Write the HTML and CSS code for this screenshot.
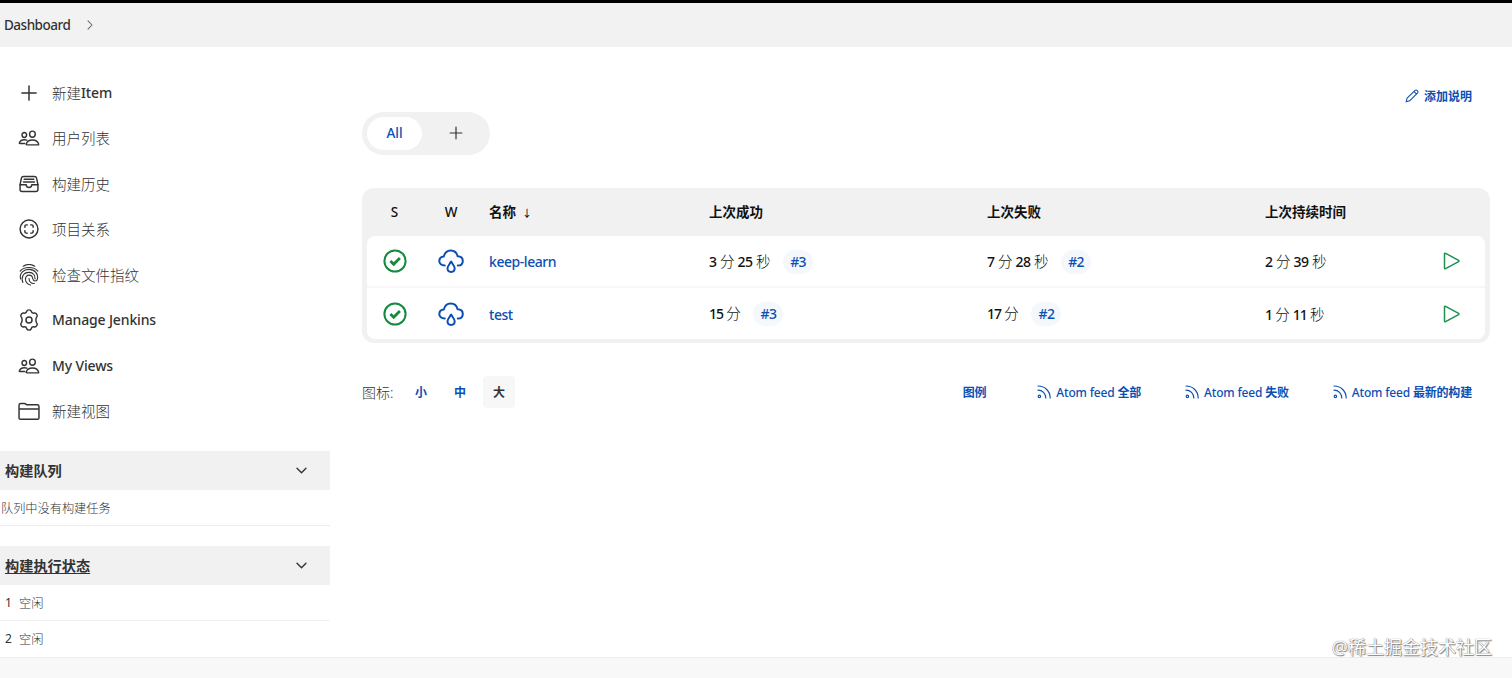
FILE: index.html
```html
<!DOCTYPE html>
<html lang="zh-CN">
<head>
    <meta charset="utf-8">
    <title>Dashboard [Jenkins]</title>
    <link rel="stylesheet" href="styles.css">
</head>
<body>
    <svg class="symbols" aria-hidden="true">
        <symbol id="icon-plus" viewBox="0 0 512 512">
            <path d="M256 90v332M422 256H90"/>
        </symbol>
        <symbol id="icon-people" viewBox="0 0 512 512">
            <path d="M402 168c-3 40-33 72-66 72s-64-32-66-72c-3-42 26-72 66-72s69 31 66 72z"/>
            <path d="M336 304c-66 0-129 33-145 96-2 9 3 16 12 16h266c9 0 15-7 12-16-16-64-79-96-145-96z"/>
            <path d="M200 186c-3 32-27 58-53 58s-51-26-53-58c-3-33 21-58 53-58s55 26 53 58z"/>
            <path d="M206 306c-18-8-38-11-59-11-52 0-102 26-115 77-1 7 3 13 10 13h114"/>
        </symbol>
        <symbol id="icon-tray" viewBox="0 0 512 512">
            <path d="M384 80H128c-26 0-43 14-48 40L48 272v112a48 48 0 0 0 48 48h320a48 48 0 0 0 48-48V272l-32-152c-5-27-23-40-48-40z"/>
            <path d="M48 272h144m128 0h144M192 272a64 64 0 0 0 128 0M144 144h224M128 208h256"/>
        </symbol>
        <symbol id="icon-scan" viewBox="0 0 512 512">
            <circle cx="256" cy="256" r="208"/>
            <path d="M296 352h24a32 32 0 0 0 32-32v-24M352 216v-24a32 32 0 0 0-32-32h-24M216 352h-24a32 32 0 0 1-32-32v-24M160 216v-24a32 32 0 0 1 32-32h24"/>
        </symbol>
        <symbol id="icon-fingerprint" viewBox="0 0 512 512">
            <path d="M120 52C206 0 306 0 392 52"/>
            <path d="M50 166C136 54 376 54 462 166"/>
            <path d="M62 350C20 216 130 126 256 126c140 0 220 110 196 226-14 62-98 54-106-4-8-60-44-88-90-88s-90 40-82 106c10 68 56 108 118 124"/>
            <path d="M112 430c-46-120 10-236 144-236 108 0 146 84 140 152"/>
            <path d="M256 336c2 84 56 124 124 116"/>
        </symbol>
        <symbol id="icon-gear" viewBox="0 0 512 512">
            <circle cx="256" cy="256" r="70"/>
            <path d="M204 52c10-42 94-42 104 0 8 32 38 50 72 42 44-12 88 62 56 94-26 24-26 112 0 136 32 32-12 106-56 94-34-8-64 10-72 42-10 42-94 42-104 0-8-32-38-50-72-42-44 12-88-62-56-94 26-24 26-112 0-136-32-32 12-106 56-94 34 8 64-10 72-42z"/>
        </symbol>
        <symbol id="icon-folder" viewBox="0 0 512 512">
            <path d="M24 416V120a40 40 0 0 1 40-40h88c28 0 36 32 64 32h232a40 40 0 0 1 40 40v264a32 32 0 0 1-32 32H56a32 32 0 0 1-32-32zM24 208h464"/>
        </symbol>
        <symbol id="icon-chevron" viewBox="0 0 512 512">
            <path d="M80 170l176 172 176-172"/>
        </symbol>
        <symbol id="icon-success" viewBox="0 0 24 24">
            <circle cx="12" cy="12" r="10.6"/>
            <path class="tick" d="M7.400 12l3.300 3.300 6.200-6.200"/>
        </symbol>
        <symbol id="icon-rain" viewBox="0 0 26 24">
            <path d="M6.800 16.500C3.500 16.500 1.300 14.700 1.300 12.200c0-2.600 1.800-4.300 4.500-4.600C6.700 3.600 9.300 1.500 12.700 1.500c3.400 0 6 2 6.900 5.700 3.200.1 5.200 2 5.200 4.700 0 2.700-2 4.600-5 4.600"/>
            <path d="M13.100 12.600c-1.500 2.500-3.600 4.600-3.600 6.700 0 2.200 1.600 3.600 3.600 3.600s3.600-1.400 3.600-3.600c0-2.100-2.100-4.200-3.600-6.700z"/>
        </symbol>
        <symbol id="icon-play" viewBox="0 0 18 18">
            <path d="M1.500 1.900v14.200c0 .7.600.9 1.100.6l13-7.100c.5-.3.500-.9 0-1.200l-13-7.100c-.5-.3-1.100 0-1.100.6z"/>
        </symbol>
        <symbol id="icon-pencil" viewBox="0 0 16 16">
            <path d="M1.300 14.700l1.100-4.200L11.500 1.500c1.600-1.300 4.200 1.100 2.900 2.900L5.300 13.500zM10.200 2.800l3 3"/>
        </symbol>
        <symbol id="icon-rss" viewBox="0 0 14 14">
            <circle cx="2.400" cy="11.400" r="1.200"/>
            <path d="M1 5.200c4.400 0 7.800 3.200 7.800 7.800M1 1c7 0 12.200 5.200 12.200 12"/>
        </symbol>
    </svg>

    <header class="breadcrumbs">
        <a>Dashboard</a>
        <svg class="icon crumb-arrow"><use href="#icon-chevron"/></svg>
    </header>

    <div class="page-body">
        <aside class="side-panel">
            <nav class="tasks">
                <a class="task"><svg class="icon"><use href="#icon-plus"/></svg>新建<span>Item</span></a>
                <a class="task"><svg class="icon"><use href="#icon-people"/></svg>用户列表</a>
                <a class="task"><svg class="icon"><use href="#icon-tray"/></svg>构建历史</a>
                <a class="task"><svg class="icon"><use href="#icon-scan"/></svg>项目关系</a>
                <a class="task"><svg class="icon icon-fine"><use href="#icon-fingerprint"/></svg>检查文件指纹</a>
                <a class="task"><svg class="icon"><use href="#icon-gear"/></svg><span>Manage Jenkins</span></a>
                <a class="task"><svg class="icon"><use href="#icon-people"/></svg><span>My Views</span></a>
                <a class="task"><svg class="icon"><use href="#icon-folder"/></svg>新建视图</a>
            </nav>

            <section class="pane">
                <div class="pane-header">
                    <b>构建队列</b>
                    <svg class="icon"><use href="#icon-chevron"/></svg>
                </div>
                <div class="pane-row queue-empty">队列中没有构建任务</div>
            </section>

            <section class="pane">
                <div class="pane-header">
                    <b class="underlined">构建执行状态</b>
                    <svg class="icon"><use href="#icon-chevron"/></svg>
                </div>
                <div class="pane-row"><span class="num">1</span>空闲</div>
                <div class="pane-row"><span class="num">2</span>空闲</div>
            </section>
        </aside>

        <main class="main-panel">
            <div class="description">
                <a class="link"><svg class="icon"><use href="#icon-pencil"/></svg><b>添加说明</b></a>
            </div>

            <div class="tab-bar">
                <a class="tab active">All</a>
                <a class="tab"><svg class="icon"><use href="#icon-plus"/></svg></a>
            </div>

            <div class="table-wrap">
                <table class="jobs">
                    <colgroup>
                        <col class="col-status">
                        <col class="col-weather">
                        <col class="col-name">
                        <col class="col-time">
                        <col class="col-time">
                        <col>
                        <col class="col-run">
                    </colgroup>
                    <thead>
                        <tr>
                            <th class="center">S</th>
                            <th class="center">W</th>
                            <th><b>名称</b><span class="sort">↓</span></th>
                            <th><b>上次成功</b></th>
                            <th><b>上次失败</b></th>
                            <th><b>上次持续时间</b></th>
                            <th></th>
                        </tr>
                    </thead>
                    <tbody>
                        <tr>
                            <td class="center"><svg class="status"><use href="#icon-success"/></svg></td>
                            <td class="center"><svg class="weather"><use href="#icon-rain"/></svg></td>
                            <td><a class="job-link">keep-learn</a></td>
                            <td>3 <i>分</i> 25 <i>秒</i><a class="badge">#3</a></td>
                            <td>7 <i>分</i> 28 <i>秒</i><a class="badge">#2</a></td>
                            <td class="duration">2 <i>分</i> 39 <i>秒</i></td>
                            <td class="center"><svg class="run"><use href="#icon-play"/></svg></td>
                        </tr>
                        <tr>
                            <td class="center"><svg class="status"><use href="#icon-success"/></svg></td>
                            <td class="center"><svg class="weather"><use href="#icon-rain"/></svg></td>
                            <td><a class="job-link">test</a></td>
                            <td><span class="tight">15</span> <i>分</i><a class="badge">#3</a></td>
                            <td><span class="tight">17</span> <i>分</i><a class="badge">#2</a></td>
                            <td class="duration"><span class="tight">1</span> <i>分</i> <span class="tight">11</span> <i>秒</i></td>
                            <td class="center"><svg class="run"><use href="#icon-play"/></svg></td>
                        </tr>
                    </tbody>
                </table>
            </div>

            <div class="table-footer">
                <div class="icon-sizes">
                    <span class="label">图标:</span>
                    <a class="size">小</a>
                    <a class="size">中</a>
                    <a class="size selected">大</a>
                </div>
                <div class="feeds">
                    <a class="link"><b>图例</b></a>
                    <a class="link"><svg class="icon"><use href="#icon-rss"/></svg><span>Atom feed <b>全部</b></span></a>
                    <a class="link"><svg class="icon"><use href="#icon-rss"/></svg><span>Atom feed <b>失败</b></span></a>
                    <a class="link"><svg class="icon"><use href="#icon-rss"/></svg><span>Atom feed <b>最新的构建</b></span></a>
                </div>
            </div>
        </main>
    </div>

    <footer class="page-footer"></footer>
    <div class="watermark">@稀土掘金技术社区</div>
</body>
</html>
```
FILE: styles.css
```css
* {
    box-sizing: border-box;
}
body {
    margin: 0;
    height: 678px;
    overflow: hidden;
    position: relative;
    display: flex;
    flex-direction: column;
    background: #fff;
    color: #333;
    font-family: "Noto Sans", "Noto Sans CJK SC", sans-serif;
    font-size: 14px;
}
b {
    font-weight: 700;
}
i {
    font-style: normal;
    font-weight: 300;
    font-size: 14.5px;
}
.symbols {
    position: absolute;
    width: 0;
    height: 0;
}
svg {
    display: block;
    flex: none;
    fill: none;
    stroke: currentColor;
    stroke-linecap: round;
    stroke-linejoin: round;
}
.icon {
    width: 22px;
    height: 22px;
    stroke-width: 34px;
}
.icon-fine {
    stroke-width: 26px;
}

/* breadcrumbs */
.breadcrumbs {
    height: 47px;
    flex: none;
    display: flex;
    align-items: center;
    gap: 14px;
    padding-left: 4px;
    background: #f2f2f2;
    border-top: 3px solid #000;
    font-size: 13.5px;
    font-weight: 500;
    letter-spacing: -0.5px;
}
.crumb-arrow {
    width: 12px;
    height: 12px;
    stroke-width: 44px;
    color: #666;
    transform: rotate(-90deg);
}

.page-body {
    display: flex;
    height: 610px;
    flex: none;
}

/* side panel */
.side-panel {
    width: 330px;
    padding-top: 23px;
}
.tasks {
    margin-bottom: 17px;
}
.task {
    display: flex;
    align-items: center;
    height: 45.5px;
    padding: 0 0 1px 18px;
    font-size: 14.5px;
    font-weight: 300;
}
.task .icon {
    margin: 1px 12px 0 0;
}
.task span {
    font-size: 14px;
    font-weight: 500;
    letter-spacing: -0.15px;
}
.pane {
    margin-bottom: 20px;
}
.pane-header {
    height: 39px;
    display: flex;
    align-items: center;
    justify-content: space-between;
    padding: 0 22px 0 5px;
    background: #f1f1f1;
    font-size: 14.2px;
}
.pane-header b {
    margin-bottom: 1px;
}
.pane-header .icon {
    width: 13px;
    height: 13px;
    stroke-width: 55px;
}
.underlined {
    text-decoration: underline;
    text-underline-offset: 2px;
}
.pane-row {
    height: 36px;
    display: flex;
    align-items: center;
    padding-left: 5px;
    border-bottom: 1px solid #f1f1f1;
    font-size: 12.2px;
    font-weight: 300;
}
.pane-row:last-child {
    border-bottom-color: transparent;
}
.pane-row.queue-empty {
    padding-left: 1px;
    border-bottom-color: #ececec;
}
.num {
    width: 14px;
    font-size: 12px;
    font-weight: 400;
}

/* main panel */
.main-panel {
    width: 1160px;
    padding: 38px 0 0 32px;
}
.link {
    display: flex;
    align-items: center;
    gap: 5px;
    color: #0b4fb3;
    font-size: 12px;
    font-weight: 500;
    letter-spacing: -0.1px;
    white-space: nowrap;
}
.link .icon {
    width: 14px;
    height: 14px;
    stroke-width: 1.2px;
}
.description {
    height: 22px;
    display: flex;
    justify-content: flex-end;
    padding-right: 18px;
}
.description .link {
    letter-spacing: 0;
}
.tab-bar {
    display: flex;
    width: 128px;
    height: 43px;
    margin: 5px 0 33px;
    padding: 5px;
    border-radius: 22px;
    background: #f1f1f1;
}
.tab {
    width: 55px;
    height: 33px;
    display: flex;
    align-items: center;
    justify-content: center;
    padding-bottom: 1px;
    border-radius: 17px;
    font-size: 13.5px;
    font-weight: 500;
}
.tab.active {
    background: #fff;
    color: #0b4fb3;
    margin-right: 6px;
}
.tab .icon {
    width: 18px;
    height: 18px;
}

/* job table */
.table-wrap {
    height: 155px;
    padding: 0 5px;
    border-radius: 12px;
    background: #f1f1f1;
}
.jobs {
    width: 1118px;
    table-layout: fixed;
    border-collapse: separate;
    border-spacing: 0;
    color: #111;
}
.col-status {
    width: 55px;
}
.col-weather {
    width: 58px;
}
.col-name {
    width: 220px;
}
.col-time {
    width: 278px;
}
.col-run {
    width: 67px;
}
.jobs th {
    height: 48px;
    padding: 0 9px 2px;
    text-align: left;
    font-size: 13.5px;
    font-weight: 500;
}
.jobs td {
    height: 52px;
    padding: 1px 9px 0;
    background: #fff;
    font-size: 14px;
    font-weight: 500;
    letter-spacing: -0.35px;
    white-space: nowrap;
}
.jobs td.duration {
    padding: 0 9px 1px;
}
.jobs tbody tr:first-child td {
    border-bottom: 2px solid #f7f7f7;
}
.jobs tbody tr:last-child td {
    height: 51px;
}
.jobs tr:first-child td:first-child {
    border-top-left-radius: 8px;
}
.jobs tr:first-child td:last-child {
    border-top-right-radius: 8px;
}
.jobs tr:last-child td:first-child {
    border-bottom-left-radius: 8px;
}
.jobs tr:last-child td:last-child {
    border-bottom-right-radius: 8px;
}
.jobs th.center,
.jobs td.center {
    padding: 0;
    text-align: center;
}
.center svg {
    margin: 0 auto;
}
.sort {
    margin-left: 6px;
    font-size: 10px;
}
.tight {
    letter-spacing: -1px;
}
.status {
    width: 24px;
    height: 24px;
    color: #138a3e;
    stroke-width: 2px;
}
.tick {
    stroke-width: 2.8px;
    stroke-linecap: butt;
    stroke-linejoin: miter;
}
.weather {
    width: 26px;
    height: 24px;
    color: #0b4fb3;
    stroke-width: 2px;
}
.run {
    width: 18px;
    height: 18px;
    color: #1c9150;
    stroke-width: 1.5px;
}
.job-link {
    color: #0b4fb3;
    letter-spacing: -0.45px;
}
.badge {
    display: inline-block;
    margin-left: 13px;
    padding: 0 7px;
    border-radius: 12px;
    background: #f4f8fd;
    color: #0b4fb3;
    letter-spacing: -0.6px;
    line-height: 24px;
}

/* icon sizes and feeds */
.table-footer {
    display: flex;
    justify-content: space-between;
    align-items: center;
    height: 33px;
    margin-top: 32px;
    padding-right: 18px;
}
.icon-sizes {
    display: flex;
    align-items: center;
}
.label {
    width: 43px;
    font-size: 14px;
    font-weight: 300;
}
.size {
    width: 32px;
    height: 32px;
    margin-right: 7px;
    line-height: 34px;
    text-align: center;
    border-radius: 4px;
    color: #0b4fb3;
    font-size: 12px;
    font-weight: 700;
}
.size.selected {
    background: #f7f7f7;
    color: #333;
}
.feeds {
    display: flex;
    gap: 44px;
    padding-top: 1px;
}
.feeds .link {
    letter-spacing: -0.18px;
}
.feeds .link:first-child {
    margin-right: 7px;
}

.page-footer {
    flex: 1;
    background: #f8f8f8;
    border-top: 1px solid #ededed;
}
.watermark {
    position: absolute;
    right: 20px;
    bottom: 18px;
    color: #fff;
    font-size: 18px;
    line-height: 26px;
    text-shadow: 0 0 1px #555, 1px 1px 1px #888;
}
```
